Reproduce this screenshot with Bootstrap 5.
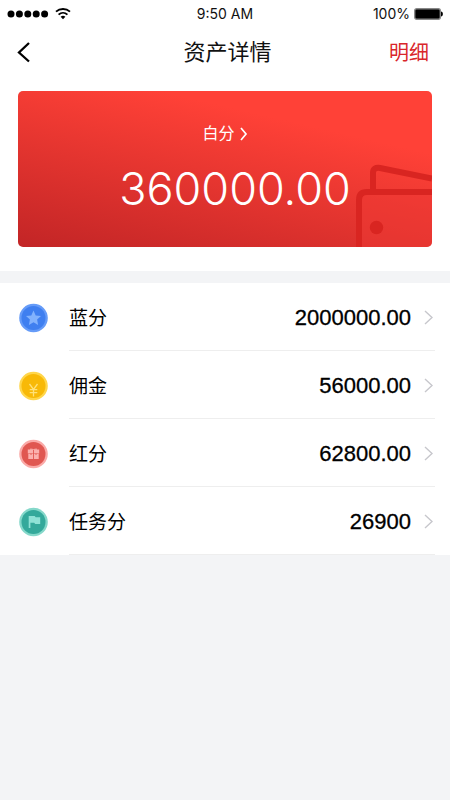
<!DOCTYPE html>
<html lang="zh-CN">
<head>
<meta charset="utf-8">
<meta name="viewport" content="width=device-width, initial-scale=1">
<title>资产详情</title>
<link href="https://cdn.jsdelivr.net/npm/bootstrap@5.3.0/dist/css/bootstrap.min.css" rel="stylesheet">
<style>
  body { background: #f3f4f6; color: #111; font-family: "Liberation Sans", "Noto Sans CJK SC", sans-serif; }
  svg { display: block; flex: none; }
  .status-bar { height: 27px; padding: 0 7px; font: 14px/27px Inter, sans-serif; color: #111; }
  .title-bar { height: 50px; padding: 2px 21px 0 16px; }
  .title-bar h1 { font-size: 22px; line-height: 32px; padding-left: 10px; }
  .side { flex: 1 1 0; }
  .detail-link { font-size: 20px; line-height: 32px; color: #d9262b; }
  .balance-wrap { padding: 14px 18px 24px; }
  .balance { height: 156px; border-radius: 5px; color: #fff; padding-top: 31px; background: linear-gradient(13deg, #c22526 0%, #ff4137 75%); }
  .balance-link { font-size: 16px; line-height: 24px; gap: 5px; }
  .balance-sum { font: 300 45px/56px Inter, sans-serif; padding: 15px 0 0 20px; }
  .wallet { right: 0; bottom: 0; }
  .asset-list { margin-top: 12px; }
  .asset { padding-left: 19px; color: #000; }
  .asset > svg { margin-top: 2px; }
  .asset-body { height: 68px; margin: 0 15px 0 20px; padding: 2px 2px 0 0; border-bottom: 1px solid #eeeeee; }
  .asset-name { font-size: 19px; line-height: 28px; padding-top: 2px; }
  .asset-value { font-size: 22px; line-height: 28px; -webkit-text-stroke: 0.3px #000; margin-right: 13px; }
</style>
</head>
<body>
<div class="bg-white">
  <div class="status-bar d-flex align-items-center">
    <div class="side d-flex align-items-center">
      <svg width="42" height="8" viewBox="0 0 42 8" fill="#000" aria-hidden="true"><circle cx="4" cy="4" r="3.5"/><circle cx="12.4" cy="4" r="3.5"/><circle cx="20.8" cy="4" r="3.5"/><circle cx="29.2" cy="4" r="3.5"/><circle cx="37.6" cy="4" r="3.5"/></svg>
      <svg class="ms-1" width="20" height="14" viewBox="0 0 20 14" fill="none" stroke="#000" stroke-width="1.9" aria-hidden="true"><path d="M3 4.600a10.500 10.500 0 0 1 14 0M5.600 7.600a6.600 6.600 0 0 1 8.800 0"/><path d="M7.600 9.800a3.600 3.600 0 0 1 4.800 0L10 12.200z" fill="#000" stroke="none"/></svg>
    </div>
    <span>9:50 AM</span>
    <div class="side d-flex align-items-center justify-content-end">
      <span>100%</span>
      <svg class="ms-1" width="29" height="12" viewBox="0 0 29 12" aria-hidden="true"><rect x=".7" y=".7" width="25.6" height="10.6" rx="2" fill="#000" stroke="#888" stroke-width="1.4"/><path d="M27 3.500c2.500 0 2.500 5 0 5z" fill="#000"/></svg>
    </div>
  </div>
  <header class="title-bar d-flex align-items-center">
    <div class="side"><button type="button" class="btn p-0 border-0 d-block" aria-label="返回"><svg width="16" height="24" viewBox="0 0 16 24" fill="none" stroke="#000" stroke-width="2.3" aria-hidden="true"><path d="M13 2L3 11.500L13 20.500"/></svg></button></div>
    <h1 class="m-0 fw-normal">资产详情</h1>
    <div class="side text-end"><a class="detail-link text-decoration-none" href="#">明细</a></div>
  </header>
  <section class="balance-wrap">
    <div class="balance position-relative overflow-hidden text-center">
      <svg class="wallet position-absolute" width="77" height="84" viewBox="0 0 77 84" fill="none" stroke="#d92521" stroke-width="6" aria-hidden="true"><path d="M5 84V37q0-8 8-8H77V84z" fill="#f03a35" fill-opacity=".45" stroke="none"/><path d="M4 84V37q0-8 8-8H77M18 29V10q0-6 7-5L77 15.500"/><circle cx="21.500" cy="64.500" r="6.700" fill="#d92521" stroke="none"/></svg>
      <a class="balance-link d-flex align-items-center justify-content-center text-white text-decoration-none position-relative" href="#">白分<svg width="8" height="14" viewBox="0 0 8 14" fill="none" stroke="#fff" stroke-width="1.7" aria-hidden="true"><path d="M1 1l5 6l-5 6"/></svg></a>
      <div class="balance-sum position-relative">360000.00</div>
    </div>
  </section>
</div>
<main class="asset-list bg-white">
  <a class="asset d-flex align-items-center text-decoration-none" href="#">
    <svg width="30" height="30" viewBox="0 0 30 30" aria-hidden="true"><circle cx="14.500" cy="15" r="14.300" fill="#659bf8"/><circle cx="14.500" cy="15" r="12" fill="#3f7ff0"/><path d="M14.500 7.500l2.200 4.900 5.300.6-3.900 3.600 1 5.300-4.600-2.600-4.600 2.600 1-5.300-3.900-3.600 5.300-.6z" fill="#82b2fd"/></svg>
    <div class="asset-body flex-fill d-flex align-items-center"><span class="asset-name me-auto">蓝分</span><span class="asset-value">2000000.00</span><svg width="9" height="16" viewBox="0 0 9 16" fill="none" stroke="#c7c7cc" stroke-width="1.400" aria-hidden="true"><path d="M1 1l7 6.500l-7 6.500"/></svg></div>
  </a>
  <a class="asset d-flex align-items-center text-decoration-none" href="#">
    <svg width="30" height="30" viewBox="0 0 30 30" aria-hidden="true"><circle cx="14.500" cy="15" r="14.300" fill="#ffd64b"/><circle cx="14.500" cy="15" r="12" fill="#f8b907"/><path d="M10.500 13l4 5.500 4-5.500M14.500 18.500V25.500M10.700 18.700h7.600M10.700 21.700h7.600" fill="none" stroke="#ffe17a" stroke-width="1.300"/></svg>
    <div class="asset-body flex-fill d-flex align-items-center"><span class="asset-name me-auto">佣金</span><span class="asset-value">56000.00</span><svg width="9" height="16" viewBox="0 0 9 16" fill="none" stroke="#c7c7cc" stroke-width="1.400" aria-hidden="true"><path d="M1 1l7 6.500l-7 6.500"/></svg></div>
  </a>
  <a class="asset d-flex align-items-center text-decoration-none" href="#">
    <svg width="30" height="30" viewBox="0 0 30 30" aria-hidden="true"><circle cx="14.500" cy="15" r="14.300" fill="#faaaa8"/><circle cx="14.500" cy="15" r="12" fill="#e05751"/><path d="M8.800 10.500h11.400v4H8.800zM9.300 15h10.400v5H9.300z" fill="#fbb1ae"/><path d="M11 10.200h2.500l1 1 1-1h2.500" fill="none" stroke="#fbb1ae"/><path d="M14.500 11v9M12 14.500v1.500M17 14.500v1.500" stroke="#e05751" stroke-width=".9"/></svg>
    <div class="asset-body flex-fill d-flex align-items-center"><span class="asset-name me-auto">红分</span><span class="asset-value">62800.00</span><svg width="9" height="16" viewBox="0 0 9 16" fill="none" stroke="#c7c7cc" stroke-width="1.400" aria-hidden="true"><path d="M1 1l7 6.500l-7 6.500"/></svg></div>
  </a>
  <a class="asset d-flex align-items-center text-decoration-none" href="#">
    <svg width="30" height="30" viewBox="0 0 30 30" aria-hidden="true"><circle cx="14.500" cy="15" r="14.300" fill="#85d8ca"/><circle cx="14.500" cy="15" r="12" fill="#34a99b"/><path d="M9.700 9h6l1 1.200h4.500v6.800h-5l-1-1.200h-3.800V21H9.700z" fill="#8fe2d6"/></svg>
    <div class="asset-body flex-fill d-flex align-items-center"><span class="asset-name me-auto">任务分</span><span class="asset-value">26900</span><svg width="9" height="16" viewBox="0 0 9 16" fill="none" stroke="#c7c7cc" stroke-width="1.400" aria-hidden="true"><path d="M1 1l7 6.500l-7 6.500"/></svg></div>
  </a>
</main>
<script src="https://cdn.jsdelivr.net/npm/bootstrap@5.3.0/dist/js/bootstrap.bundle.min.js"></script>
</body>
</html>
